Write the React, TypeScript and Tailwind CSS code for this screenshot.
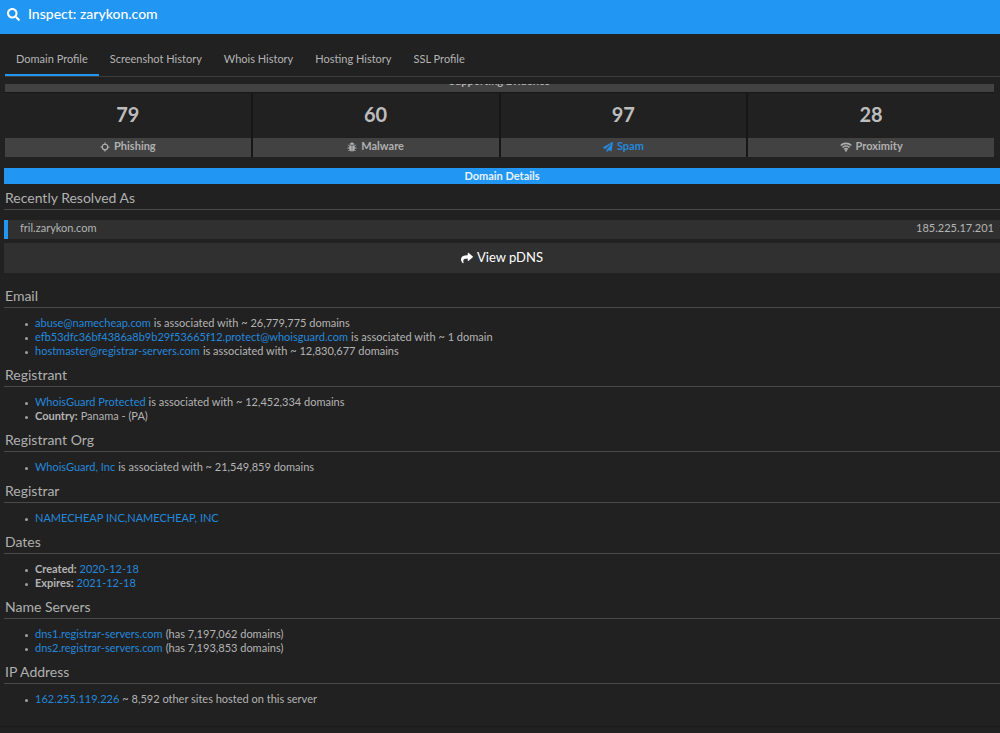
import type { ReactNode } from "react";
import { FaPaperPlane, FaSearch, FaShare } from "react-icons/fa";

interface Stat {
  label: string;
  value: number;
  icon: ReactNode;
  active?: boolean;
}

interface DetailItem {
  label?: string;
  link?: string;
  text?: string;
}

interface DetailSection {
  title: string;
  items: DetailItem[];
}

const TABS = [
  "Domain Profile",
  "Screenshot History",
  "Whois History",
  "Hosting History",
  "SSL Profile",
];

const STATS: Stat[] = [
  { label: "Phishing", value: 79, icon: <CrosshairIcon /> },
  { label: "Malware", value: 60, icon: <BugIcon /> },
  { label: "Spam", value: 97, icon: <FaPaperPlane size={10} />, active: true },
  { label: "Proximity", value: 28, icon: <WifiIcon /> },
];

const SECTIONS: DetailSection[] = [
  {
    title: "Email",
    items: [
      { link: "abuse@namecheap.com", text: "is associated with ~ 26,779,775 domains" },
      {
        link: "efb53dfc36bf4386a8b9b29f53665f12.protect@whoisguard.com",
        text: "is associated with ~ 1 domain",
      },
      { link: "hostmaster@registrar-servers.com", text: "is associated with ~ 12,830,677 domains" },
    ],
  },
  {
    title: "Registrant",
    items: [
      { link: "WhoisGuard Protected", text: "is associated with ~ 12,452,334 domains" },
      { label: "Country:", text: "Panama - (PA)" },
    ],
  },
  {
    title: "Registrant Org",
    items: [{ link: "WhoisGuard, Inc", text: "is associated with ~ 21,549,859 domains" }],
  },
  { title: "Registrar", items: [{ link: "NAMECHEAP INC,NAMECHEAP, INC" }] },
  {
    title: "Dates",
    items: [
      { label: "Created:", link: "2020-12-18" },
      { label: "Expires:", link: "2021-12-18" },
    ],
  },
  {
    title: "Name Servers",
    items: [
      { link: "dns1.registrar-servers.com", text: "(has 7,197,062 domains)" },
      { link: "dns2.registrar-servers.com", text: "(has 7,193,853 domains)" },
    ],
  },
  {
    title: "IP Address",
    items: [{ link: "162.255.119.226", text: "~ 8,592 other sites hosted on this server" }],
  },
];

function CrosshairIcon() {
  return (
    <svg width="10" height="10" viewBox="0 0 20 20" fill="none" stroke="currentColor">
      <circle cx="10" cy="10" r="5.5" strokeWidth="2.4" />
      <path d="M10 1v5M10 14v5M1 10h5M14 10h5" strokeWidth="2.4" />
    </svg>
  );
}

function BugIcon() {
  return (
    <svg width="10" height="10" viewBox="0 0 20 20" fill="currentColor">
      <path d="M5.5 5.5a4.5 4.5 0 0 1 9 0Z" />
      <path d="M4.5 7h5v12c-3-.3-5-2.500-5-5.500ZM10.500 7h5v6.500c0 3-2 5.200-5 5.500Z" />
      <path
        d="M5.500 8.500l-3-3M14.500 8.500l3-3M5 12H1M15 12h4M6 15l-3 3M14 15l3 3"
        fill="none"
        stroke="currentColor"
        strokeWidth="2"
      />
    </svg>
  );
}

function WifiIcon() {
  return (
    <svg width="12" height="10" viewBox="0 0 24 20" fill="none" stroke="currentColor">
      <path d="M1.500 7a15 15 0 0 1 21 0" strokeWidth="3.500" />
      <path d="M5 11a10 10 0 0 1 14 0" strokeWidth="3.500" />
      <path d="M8.500 15a5 5 0 0 1 7 0" strokeWidth="3.500" />
      <path d="M12 15l2.500 2.500L12 20l-2.500-2.500Z" fill="currentColor" stroke="none" />
    </svg>
  );
}

function SectionTitle({ children }: { children: ReactNode }) {
  return (
    <h2 className="h-[23px] border-b border-[#4a4a4a] pl-px text-sm leading-[21px] text-[#b0b0b0]">
      {children}
    </h2>
  );
}

function Section({ title, items }: DetailSection) {
  return (
    <section>
      <SectionTitle>{title}</SectionTitle>
      <ul className="pt-2 pb-[6px]">
        {items.map((item) => (
          <li
            key={item.link ?? item.label}
            className="flex h-[14px] items-center gap-[3px] pl-[21px] text-[11px] leading-[14px]"
          >
            <span className="mt-[3px] mr-1 size-[3px] shrink-0 rounded-full bg-[#a0a0a0]" />
            {item.label && <b>{item.label}</b>}
            {item.link && (
              <a href="#" className="text-[#2488dc]">
                {item.link}
              </a>
            )}
            {item.text && <span>{item.text}</span>}
          </li>
        ))}
      </ul>
    </section>
  );
}

function StatCard({ label, value, icon, active }: Stat) {
  return (
    <div className="flex-1 border-r-2 border-[#171717] last:border-r-0">
      <div className="flex h-[45px] items-center justify-center pb-1 text-xl font-bold text-[#bdbdbd]">
        {value}
      </div>
      <div
        className={`flex h-[19px] items-center justify-center gap-1 bg-[#424242] pb-[2px] text-[11px] font-bold ${
          active ? "text-[#2488dc]" : "text-[#b0b0b0]"
        }`}
      >
        {icon}
        {label}
      </div>
    </div>
  );
}

export default function App() {
  return (
    <div className="min-h-screen bg-[#212121] font-['Lato',sans-serif] text-[#b4b4b4]">
      <header className="flex h-[34px] items-center gap-2 bg-[#2196f3] pb-[6px] pl-[7px] text-white">
        <FaSearch size={13} />
        <h1 className="text-sm font-medium">Inspect: zarykon.com</h1>
      </header>

      <nav className="ml-[5px] flex h-[43px] border-b border-[#3c3c3c] text-[11px]">
        {TABS.map((tab, i) => (
          <button
            key={tab}
            type="button"
            className={`border-b-2 px-[11px] pt-[10px] ${
              i === 0 ? "border-[#2196f3]" : "border-transparent"
            }`}
          >
            {tab}
          </button>
        ))}
      </nav>

      <div className="mt-[7px] mr-[6px] ml-[5px]">
        {/* Heading is scrolled most of the way out of view */}
        <div className="flex h-[8px] items-end justify-center overflow-hidden bg-[#424242] text-[11px] leading-[14px] font-bold">
          <span className="mb-1">Supporting Evidence</span>
        </div>
        <div className="flex border-t border-[#171717]">
          {STATS.map((stat) => (
            <StatCard key={stat.label} {...stat} />
          ))}
        </div>
      </div>

      <main className="ml-1">
        <h2 className="mt-[11px] mb-[3px] bg-[#2196f3] text-center text-[11px] leading-[16px] font-bold text-[#e8f3fd]">
          Domain Details
        </h2>
        <SectionTitle>Recently Resolved As</SectionTitle>
        <div className="mt-[10px] flex h-[19px] items-center justify-between border-l-4 border-[#2196f3] bg-[#303030] pr-[6px] pb-[2px] pl-3 text-[11px]">
          <span>fril.zarykon.com</span>
          <span>185.225.17.201</span>
        </div>
        <button
          type="button"
          className="mt-1 mb-3 flex h-[30px] w-full items-center justify-center gap-1 bg-[#303030] text-[13px] text-white"
        >
          <FaShare size={12} />
          View pDNS
        </button>
        {SECTIONS.map((section) => (
          <Section key={section.title} {...section} />
        ))}
      </main>

      <footer className="mt-[14px] border-t border-[#1a1a1a]" />
    </div>
  );
}
